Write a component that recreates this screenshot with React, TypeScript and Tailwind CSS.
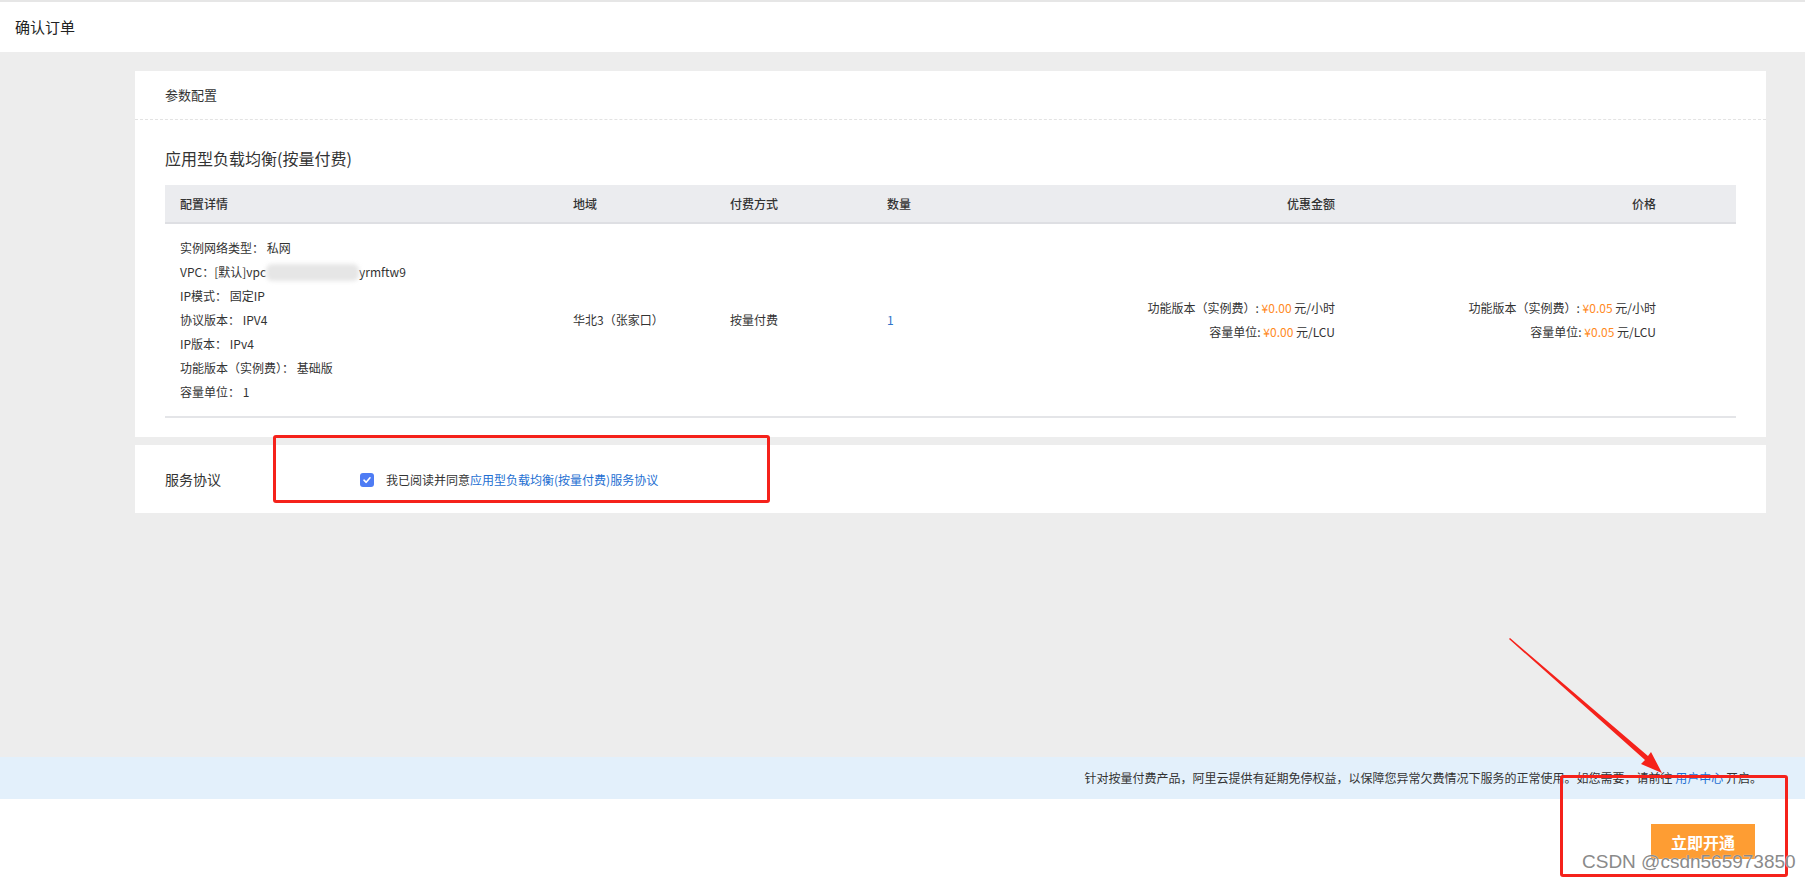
import React from "react";

const font = { fontFamily: '"Noto Sans CJK SC", "Noto Sans", sans-serif' };

function Row({ label, children }: { label: string; children: React.ReactNode }) {
  return (
    <div className="h-[24px] flex items-center whitespace-nowrap">
      <span>{label}</span>
      <span>{children}</span>
    </div>
  );
}

export default function App() {
  return (
    <div className="relative w-full h-[879px] flex flex-col bg-[#ededed] text-[#333] overflow-hidden" style={font}>
      {/* header */}
      <div className="h-[52px] shrink-0 bg-white border-t-2 border-[#e6e6e6] flex items-center pl-[15px] text-[15px] text-[#222]">
        确认订单
      </div>

      {/* content */}
      <div className="flex-1 pl-[135px] pr-[39px] pt-[19px] flex flex-col">
        {/* card 1 */}
        <div className="bg-white h-[366px] flex flex-col">
          <div className="h-[49px] shrink-0 border-b border-dashed border-[#e3e3e3] flex items-center px-[30px] text-[13px] text-[#333]">
            参数配置
          </div>
          <div className="px-[30px]">
            <div className="h-[65px] flex items-center pt-[10px] text-[16px] text-[#333]">应用型负载均衡(按量付费)</div>
            <div className="text-[12px]">
              <div className="grid grid-cols-[408px_157px_157px_157px_1fr_321px] h-[39px] items-center bg-[#ebecef] border-b-2 border-[#dedfe3] font-medium text-[#333]">
                <div className="pl-[15px]">配置详情</div>
                <div>地域</div>
                <div>付费方式</div>
                <div>数量</div>
                <div className="text-right pr-[80px]">优惠金额</div>
                <div className="text-right pr-[80px]">价格</div>
              </div>
              <div className="grid grid-cols-[408px_157px_157px_157px_1fr_321px] items-center h-[194px] border-b-2 border-[#e4e5e8]">
                <div className="pl-[15px] text-[#333]">
                  <Row label="实例网络类型：">&nbsp;私网</Row>
                  <Row label="VPC：">
                    <span className="inline-flex items-center">
                      [默认]vpc
                      <span className="inline-block w-[93px] h-[17px] bg-[#e6e6e6] blur-[2px] rounded-[6px]"></span>
                      yrmftw9
                    </span>
                  </Row>
                  <Row label="IP模式：">&nbsp;固定IP</Row>
                  <Row label="协议版本：">&nbsp;IPV4</Row>
                  <Row label="IP版本：">&nbsp;IPv4</Row>
                  <Row label="功能版本（实例费）：">&nbsp;基础版</Row>
                  <Row label="容量单位：">&nbsp;1</Row>
                </div>
                <div>华北3（张家口）</div>
                <div>按量付费</div>
                <div className="text-[#2f74c9]">1</div>
                <div className="text-right pr-[80px] whitespace-nowrap">
                  <div className="h-[24px] leading-[24px]">功能版本（实例费）: <span className="text-[#ff8a1f]">¥0.00</span> 元/小时</div>
                  <div className="h-[24px] leading-[24px]">容量单位: <span className="text-[#ff8a1f]">¥0.00</span> 元/LCU</div>
                </div>
                <div className="text-right pr-[80px] whitespace-nowrap">
                  <div className="h-[24px] leading-[24px]">功能版本（实例费）: <span className="text-[#ff8a1f]">¥0.05</span> 元/小时</div>
                  <div className="h-[24px] leading-[24px]">容量单位: <span className="text-[#ff8a1f]">¥0.05</span> 元/LCU</div>
                </div>
              </div>
            </div>
          </div>
        </div>

        {/* card 2 */}
        <div className="bg-white h-[68px] mt-[8px] flex items-center px-[30px]">
          <div className="w-[195px] text-[14px] text-[#333]">服务协议</div>
          <div className="flex items-center text-[12px] pt-[2px]">
            <span className="w-[14px] h-[14px] rounded-[3px] bg-[#4e7cf4] flex items-center justify-center mr-[12px]">
              <svg width="10" height="10" viewBox="0 0 10 10">
                <path d="M2 5.2 L4.2 7.3 L8 2.8" stroke="white" strokeWidth="1.6" fill="none" strokeLinecap="round" strokeLinejoin="round" />
              </svg>
            </span>
            <span className="text-[#333]">我已阅读并同意</span>
            <span className="text-[#1e6fd2]">应用型负载均衡(按量付费)服务协议</span>
          </div>
        </div>
      </div>

      {/* notice bar */}
      <div className="h-[42px] shrink-0 bg-[#e3f0fb] flex items-center justify-end pr-[43px] text-[12px] text-[#333]">
        针对按量付费产品，阿里云提供有延期免停权益，以保障您异常欠费情况下服务的正常使用。如您需要，请前往&nbsp;<span className="text-[#1e6fd2]">用户中心</span>&nbsp;开启。
      </div>

      {/* footer */}
      <div className="h-[80px] shrink-0 bg-white flex items-start justify-end pr-[50px] pt-[25px]">
        <button className="w-[104px] h-[35px] bg-[#fe9d33] text-white text-[16px] font-bold">立即开通</button>
      </div>

      {/* annotations */}
      <div className="absolute left-[273px] top-[435px] w-[497px] h-[68px] border-[3px] border-[#f5221b] rounded-[3px] pointer-events-none"></div>
      <div className="absolute left-[1560px] top-[775px] w-[228px] h-[102px] border-[3px] border-[#f5221b] rounded-[3px] pointer-events-none"></div>
      <svg className="absolute left-0 top-0 pointer-events-none" width="1805" height="879">
        <polygon points="1509,639 1510,638 1648,756 1651,752 1662,773 1641,764 1645,760" fill="#f5221b" />
      </svg>
      <div
        className="absolute left-[1582px] top-[850px] text-[19px] leading-[24px] text-[#8a8a8a] pointer-events-none whitespace-nowrap"
        style={{ fontFamily: '"Liberation Sans", Arial, sans-serif', textShadow: "0 0 1px #fff" }}
      >
        CSDN @csdn565973850
      </div>
    </div>
  );
}
